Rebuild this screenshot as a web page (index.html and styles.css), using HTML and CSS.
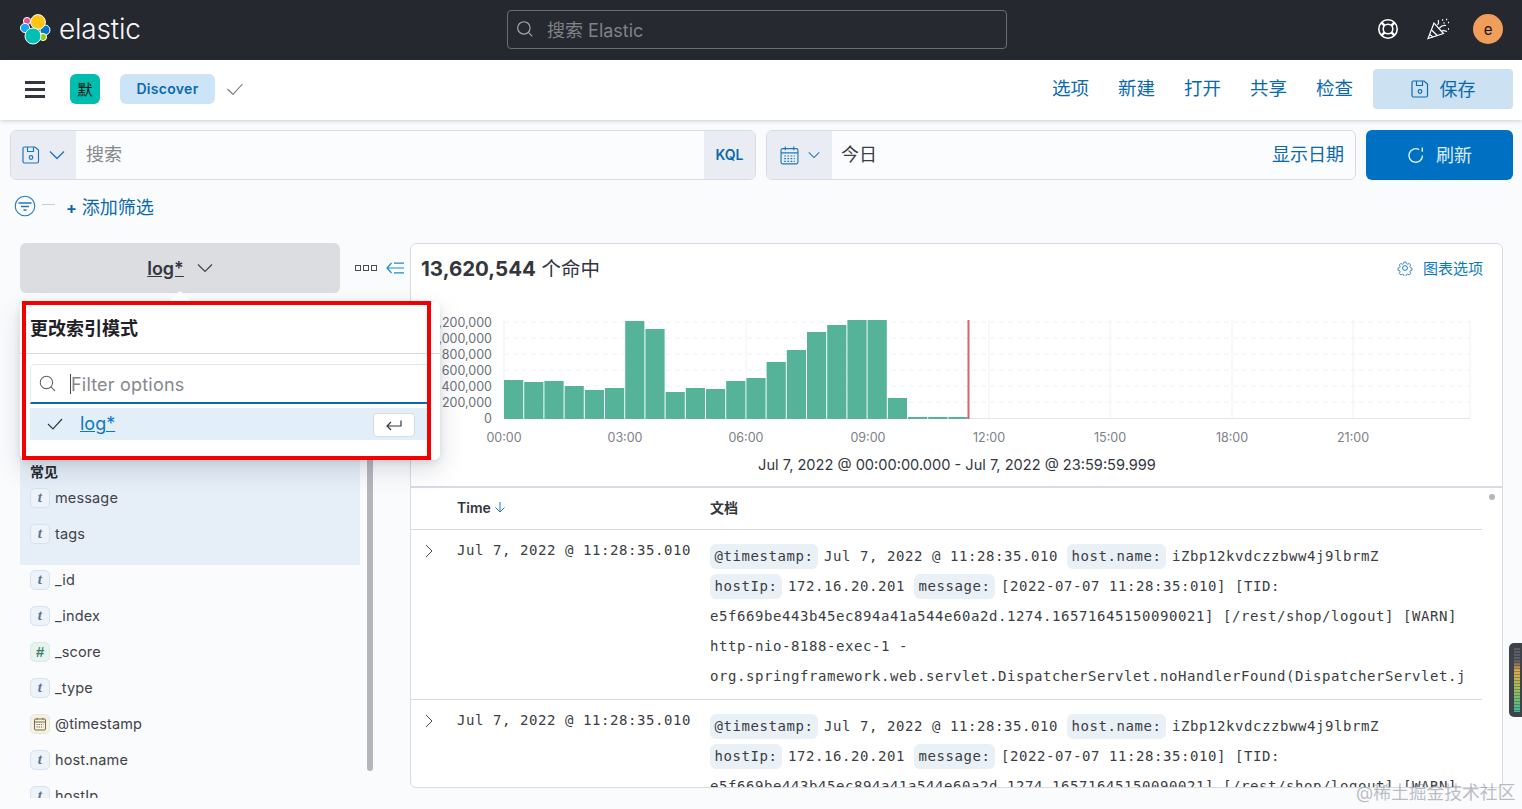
FILE: index.html
```html
<!DOCTYPE html>
<html lang="zh">
<head>
<meta charset="utf-8">
<title>Discover - Elastic</title>
<link rel="stylesheet" href="styles.css">
</head>
<body>
<header class="topbar">
  <div class="brand">
    <svg class="logo" viewBox="0 0 32 32" width="32" height="32">
      <g stroke="#fff" stroke-width="1">
        <circle cx="8" cy="8" r="3.6" fill="#ee5097"/>
        <circle cx="6" cy="15" r="4.6" fill="#1ba9f5"/>
        <circle cx="26" cy="17" r="5" fill="#0077cc"/>
        <circle cx="24" cy="24" r="3.6" fill="#93c90e"/>
        <circle cx="19" cy="9" r="7.4" fill="#fec514"/>
        <circle cx="14" cy="23" r="8" fill="#00bfb3"/>
      </g>
    </svg>
    <span class="wordmark">elastic</span>
  </div>
  <div class="global-search">
    <svg class="icon" viewBox="0 0 16 16" width="18" height="18"><circle cx="7" cy="7" r="5.5" fill="none" stroke="#a8abb0" stroke-width="1"/><path d="M11 11l3.5 3.5" stroke="#a8abb0" fill="none"/></svg>
    <span>搜索 Elastic</span>
  </div>
  <div class="top-actions">
    <svg viewBox="0 0 22 22" width="22" height="22" fill="none" stroke="#fff" stroke-width="1.6"><circle cx="11" cy="11" r="9.2"/><circle cx="11" cy="11" r="4.8"/><path d="M4.6 4.6l3 3M17.4 4.6l-3 3M4.6 17.4l3-3M17.4 17.4l-3-3" stroke-width="2.4"/></svg>
    <svg class="party" viewBox="0 0 22 22" width="22" height="22" fill="none" stroke="#fff" stroke-width="1.2"><path d="M7 5L1 20.500l15.500-5z"/><path d="M4.500 12l6 5.800M3 16.500l2.800 2.600"/><path d="M10.500 7c1.200-1.700 1.400-3.200.8-5M12.500 10c2-2.400 4-3 6.500-2.500M14.500 13c1.500-.6 3-.5 5.500.5"/><path d="M15 2h1.200M19 1.500h1.200M16.500 5h1M21 4.500h1M21 11h1" stroke-width="1.400"/></svg>
    <div class="avatar">e</div>
  </div>
</header>

<nav class="appbar">
  <div class="hamburger"><i></i><i></i><i></i></div>
  <div class="space-badge">默</div>
  <div class="crumb">Discover</div>
  <svg class="crumb-check" viewBox="0 0 16 12" width="16" height="12" fill="none" stroke="#6f7277" stroke-width="1.100"><path d="M.5 6l5.500 5.300L15.500 1"/></svg>
  <div class="app-links">
    <a>选项</a><a>新建</a><a>打开</a><a>共享</a><a>检查</a>
    <button class="save-btn">
      <svg viewBox="0 0 18 18" width="18" height="18" fill="none" stroke="#0e6cb0" stroke-width="1.200"><path d="M2.500 1h10.500l3.500 3v11.500a1.500 1.500 0 0 1-1.500 1.500h-12.500a1.500 1.500 0 0 1-1.500-1.500v-13a1.500 1.500 0 0 1 1.500-1.500z"/><path d="M5.500 1v4.500h6v-4.500"/><circle cx="9" cy="11.500" r="1.800"/></svg>
      <span>保存</span>
    </button>
  </div>
</nav>

<section class="querybar">
  <div class="field-group query-field">
    <div class="prepend">
      <svg viewBox="0 0 18 18" width="18" height="18" fill="none" stroke="#1e77bd" stroke-width="1.200"><path d="M2.500 1h10.500l3.500 3v11.500a1.500 1.500 0 0 1-1.500 1.500h-12.500a1.500 1.500 0 0 1-1.500-1.500v-13a1.500 1.500 0 0 1 1.500-1.500z"/><path d="M5.500 1v4.500h6v-4.500"/><circle cx="9" cy="11.500" r="1.800"/></svg>
      <svg viewBox="0 0 16 10" width="16" height="10" fill="none" stroke="#1e77bd" stroke-width="1.400"><path d="M1 1.500l7 7 7-7"/></svg>
    </div>
    <div class="query-text">搜索</div>
    <div class="kql">KQL</div>
  </div>
  <div class="field-group date-field">
    <div class="prepend">
      <svg viewBox="0 0 18 18" width="19" height="19" fill="none" stroke="#1e77bd" stroke-width="1.100"><rect x="1" y="2.500" width="16" height="14.500" rx="1.500"/><path d="M1 6.500h16M5 .5v3.500M13 .5v3.500"/><path d="M4 9.500h10M4 12h10M4 14.500h10" stroke-dasharray="1.600 1.400"/></svg>
      <svg viewBox="0 0 16 10" width="12" height="8" fill="none" stroke="#1e77bd" stroke-width="1.400"><path d="M1 1.500l7 7 7-7"/></svg>
    </div>
    <div class="date-text">今日</div>
    <div class="show-date">显示日期</div>
  </div>
  <button class="refresh-btn">
    <svg viewBox="0 0 18 18" width="18" height="18" fill="none" stroke="#e2f0fa" stroke-width="1.400"><path d="M15.500 9.500a6.800 6.800 0 1 1-3.400-5.900"/><path d="M15.300 1.500v4.200"/></svg>
    <span>刷新</span>
  </button>
</section>

<section class="filterbar">
  <svg viewBox="0 0 22 22" width="22" height="22" fill="none" stroke="#1e77bd" stroke-width="1.100"><circle cx="11" cy="11" r="9.800"/><path d="M4.500 8h13M7 11.500h8M9.500 15h3" stroke-width="1.300"/></svg>
  <span class="filter-dash"></span>
  <span class="add-filter"><b>+</b>添加筛选</span>
</section>

<main class="workspace">
  <aside class="sidebar">
    <div class="index-row">
      <div class="index-btn"><span>log*</span>
        <svg viewBox="0 0 16 10" width="16" height="10" fill="none" stroke="#404349" stroke-width="1.200"><path d="M1 1.500l7 7 7-7"/></svg>
      </div>
      <div class="dots"><i></i><i></i><i></i></div>
      <svg class="collapse" viewBox="0 0 18 12" width="18" height="12" fill="none" stroke="#1e8ad0" stroke-width="1.200"><path d="M5.500 1L1 6l4.500 5M1 6h17M8 1.200h10M8 10.800h10"/></svg>
    </div>

    <div class="field-pane">
      <div class="field-scroll">
        <div class="common">
          <h4>常见</h4>
          <div class="field"><span class="token t-str">t</span>message</div>
          <div class="field"><span class="token t-str">t</span>tags</div>
        </div>
        <div class="rest">
          <div class="field"><span class="token t-str">t</span>_id</div>
          <div class="field"><span class="token t-str">t</span>_index</div>
          <div class="field"><span class="token t-num">#</span>_score</div>
          <div class="field"><span class="token t-str">t</span>_type</div>
          <div class="field"><span class="token t-date"><svg viewBox="0 0 14 14" width="14" height="14" fill="none" stroke="#7b6a3f" stroke-width="1"><rect x="1.500" y="2" width="11" height="11" rx="1"/><path d="M1.500 5h11M4 .8v2M10 .8v2"/><path d="M3.500 7.500h7M3.500 10h7" stroke-dasharray="1.200 1"/></svg></span>@timestamp</div>
          <div class="field"><span class="token t-str">t</span>host.name</div>
          <div class="field"><span class="token t-str">t</span>hostIp</div>
        </div>
      </div>
      <div class="scrollbar"></div>
    </div>

    <div class="popover">
      <span class="arrow"></span>
      <h3>更改索引模式</h3>
      <div class="pop-rule"></div>
      <div class="pop-search">
        <svg viewBox="0 0 16 16" width="17" height="17" fill="none" stroke="#5f6368" stroke-width="1"><circle cx="7" cy="7" r="5.800"/><path d="M11.200 11.200l3.800 3.800"/></svg>
        <span class="caret"></span><span class="placeholder">Filter options</span>
      </div>
      <div class="pop-option">
        <svg viewBox="0 0 16 12" width="16" height="12" fill="none" stroke="#343741" stroke-width="1.200"><path d="M1 6l5 5L15 1"/></svg>
        <a>log*</a>
        <span class="enter-key"><svg viewBox="0 0 16 12" width="16" height="12" fill="none" stroke="#343741" stroke-width="1.200"><path d="M15 1.500v5.500h-14M5 3L1 7l4 4"/></svg></span>
      </div>
      <div class="red-frame"></div>
    </div>
  </aside>

  <section class="card">
    <div class="card-head">
      <div class="hits"><strong>13,620,544</strong> 个命中</div>
      <div class="chart-opts">
        <svg viewBox="0 0 16 16" width="16" height="16" fill="none" stroke="#1e77bd" stroke-width="1"><circle cx="8" cy="8" r="2.400"/><path d="M6.700 1h2.600l.4 1.900 1.500.7 1.700-1 1.800 1.900-1 1.600.6 1.500 1.900.5v2.600l-1.900.5-.6 1.500 1 1.600-1.800 1.900-1.700-1-1.500.6-.4 2h-2.600l-.4-2-1.500-.6-1.700 1-1.800-1.900 1-1.600-.6-1.500-1.900-.5v-2.600l1.900-.5.600-1.500-1-1.600 1.800-1.900 1.700 1 1.500-.7z" transform="translate(1.200 1.200) scale(.85)"/></svg>
        <span>图表选项</span>
      </div>
    </div>
    <div class="chart">
      <svg viewBox="411 294 1091 192" width="1091" height="192">
        <g class="grid-h">
          <path d="M504 322H1470M504 338H1470M504 354H1470M504 370H1470M504 386H1470M504 402H1470"/>
        </g>
        <g class="grid-v">
          <path d="M504 320V418M625 320V418M746 320V418M868 320V418M989 320V418M1110 320V418M1232 320V418M1353 320V418M1470 320V418"/>
        </g>
        <path class="axis" d="M504 418.500H1470"/>
        <g class="bars">
          <rect x="504" y="380" width="19.200" height="39"/><rect x="524.200" y="382" width="19.200" height="37"/><rect x="544.400" y="381" width="19.200" height="38"/><rect x="564.600" y="386" width="19.200" height="33"/><rect x="584.800" y="390" width="19.200" height="29"/><rect x="605" y="388" width="19.200" height="31"/><rect x="625.200" y="321" width="19.200" height="98"/><rect x="645.400" y="329" width="19.200" height="90"/><rect x="665.600" y="392" width="19.200" height="27"/><rect x="685.800" y="388" width="19.200" height="31"/><rect x="706" y="389" width="19.200" height="30"/><rect x="726.200" y="381" width="19.200" height="38"/><rect x="746.400" y="378" width="19.200" height="41"/><rect x="766.600" y="362" width="19.200" height="57"/><rect x="786.800" y="350" width="19.200" height="69"/><rect x="807" y="332" width="19.200" height="87"/><rect x="827.200" y="325" width="19.200" height="94"/><rect x="847.400" y="320" width="19.200" height="99"/><rect x="867.600" y="320" width="19.200" height="99"/><rect x="887.800" y="398" width="19.200" height="21"/><rect x="908" y="417" width="19.200" height="2"/><rect x="928.200" y="417" width="19.200" height="2"/><rect x="948.400" y="417" width="19.200" height="2"/>
        </g>
        <rect class="now" x="967.500" y="320" width="2" height="99"/>
        <g class="y-labels">
          <text x="492" y="327">1,200,000</text><text x="492" y="343">1,000,000</text><text x="492" y="359">800,000</text><text x="492" y="375">600,000</text><text x="492" y="391">400,000</text><text x="492" y="407">200,000</text><text x="492" y="423">0</text>
        </g>
        <g class="x-labels">
          <text x="504" y="442">00:00</text><text x="625" y="442">03:00</text><text x="746" y="442">06:00</text><text x="868" y="442">09:00</text><text x="989" y="442">12:00</text><text x="1110" y="442">15:00</text><text x="1232" y="442">18:00</text><text x="1353" y="442">21:00</text>
        </g>
        <text class="range" x="957" y="470">Jul 7, 2022 @ 00:00:00.000 - Jul 7, 2022 @ 23:59:59.999</text>
      </svg>
    </div>
    <div class="table">
      <div class="t-head">
        <div class="col-time">Time
          <svg viewBox="0 0 12 12" width="12" height="12" fill="none" stroke="#1e77bd" stroke-width="1"><path d="M6 1v10M1.500 6.500L6 11l4.500-4.500"/></svg>
        </div>
        <div class="col-doc">文档</div>
      </div>
      <div class="t-row">
        <svg class="chev" viewBox="0 0 8 14" width="8" height="14" fill="none" stroke="#4a4d52" stroke-width="1"><path d="M1 1l6 6-6 6"/></svg>
        <div class="col-time mono">Jul 7, 2022 @ 11:28:35.010</div>
        <div class="col-doc mono">
          <div class="line"><span class="tag">@timestamp:</span>Jul 7, 2022 @ 11:28:35.010<span class="tag">host.name:</span>iZbp12kvdczzbww4j9lbrmZ</div>
          <div class="line"><span class="tag">hostIp:</span>172.16.20.201<span class="tag">message:</span>[2022-07-07 11:28:35:010] [TID:</div>
          <div class="line">e5f669be443b45ec894a41a544e60a2d.1274.16571645150090021] [/rest/shop/logout] [WARN]</div>
          <div class="line">http-nio-8188-exec-1 -</div>
          <div class="line">org.springframework.web.servlet.DispatcherServlet.noHandlerFound(DispatcherServlet.java</div>
        </div>
      </div>
      <div class="t-row">
        <svg class="chev" viewBox="0 0 8 14" width="8" height="14" fill="none" stroke="#4a4d52" stroke-width="1"><path d="M1 1l6 6-6 6"/></svg>
        <div class="col-time mono">Jul 7, 2022 @ 11:28:35.010</div>
        <div class="col-doc mono">
          <div class="line"><span class="tag">@timestamp:</span>Jul 7, 2022 @ 11:28:35.010<span class="tag">host.name:</span>iZbp12kvdczzbww4j9lbrmZ</div>
          <div class="line"><span class="tag">hostIp:</span>172.16.20.201<span class="tag">message:</span>[2022-07-07 11:28:35:010] [TID:</div>
          <div class="line">e5f669be443b45ec894a41a544e60a2d.1274.16571645150090021] [/rest/shop/logout] [WARN]</div>
        </div>
      </div>
    </div>
    <span class="table-dot"></span>
  </section>
</main>

<div class="side-widget"><i></i></div>
<div class="watermark">@稀土掘金技术社区</div>
</body>
</html>
```

FILE: styles.css
```css
* { box-sizing: border-box; }
html, body { margin: 0; height: 100%; }
body {
  width: 1522px; height: 809px; overflow: hidden; position: relative;
  background: #fafbfd; color: #343741;
  font-family: Inter, "Noto Sans CJK SC", sans-serif; font-size: 14px;
}
a { color: inherit; }
button { font: inherit; border: 0; }

/* top bar */
.topbar { height: 60px; padding-bottom: 2px; background: #25282f; display: flex; align-items: center; position: relative; }
.brand { display: flex; align-items: center; margin-left: 19px; width: 488px; }
.logo { display: block; }
.wordmark { margin-left: 8px; color: #f5f7fa; font-size: 28px; font-weight: 300; letter-spacing: -.2px; }
.global-search {
  width: 500px; height: 39px; border: 1px solid #6a6d72; border-radius: 4px;
  display: flex; align-items: center; padding-left: 8px; gap: 13px;
  color: #7f8287; font-size: 18px; background: #26292f;
}
.top-actions { display: flex; align-items: center; margin-left: auto; margin-right: 19px; }
.top-actions svg { display: block; }
.party { margin: 0 24px 0 28px; }
.avatar {
  width: 30px; height: 30px; border-radius: 50%; background: #f19e5b; color: #111;
  display: flex; align-items: center; justify-content: center; font-size: 15px;
}

/* app bar */
.appbar {
  height: 60px; padding: 0 0 2px 25px; background: #fff; display: flex; align-items: center;
  box-shadow: 0 1px 4px rgba(60,70,90,.25); position: relative; z-index: 3;
}
.hamburger { width: 20px; display: flex; flex-direction: column; gap: 4px; }
.hamburger i { display: block; height: 3px; background: #33363c; }
.space-badge {
  width: 30px; height: 30px; margin-left: 25px; border-radius: 6px; background: #00bdae; color: #111;
  display: flex; align-items: center; justify-content: center; font-size: 15px; padding-bottom: 2px;
}
.crumb {
  margin-left: 20px; width: 95px; height: 30px; border-radius: 6px; background: #cce4f5; color: #0a69ad;
  display: flex; align-items: center; justify-content: center; font-weight: 600; font-size: 14px; letter-spacing: .3px; padding-bottom: 2px;
}
.crumb-check { margin-left: 12px; }
.app-links { margin-left: auto; margin-right: 9px; display: flex; align-items: center; color: #0a69ad; font-size: 18.500px; }
.app-links a { margin-right: 29px; line-height: 40px; padding-bottom: 2px; }
.app-links a:nth-child(5) { margin-right: 20px; }
.save-btn {
  width: 140px; height: 40px; background: #cce2f3; color: #0a69ad; border-radius: 4px; font-size: 18px;
  display: flex; align-items: center; justify-content: center; gap: 11px;
}
.save-btn span, .refresh-btn span { padding-bottom: 3px; }

/* query */
.querybar { margin-top: 10px; padding: 0 9px 0 10px; display: flex; gap: 10px; height: 50px; }
.field-group {
  display: flex; align-items: center; height: 50px; border: 1px solid #d8dbe2; border-radius: 6px;
  background: #fbfcfd; overflow: hidden; font-size: 18px;
}
.query-field { width: 746px; }
.date-field { width: 590px; }
.prepend { width: 65px; height: 100%; background: #e9edf3; display: flex; align-items: center; justify-content: center; gap: 9px; flex: none; }
.query-text { flex: 1; padding: 0 0 5px 10px; color: #84878c; }
.kql { width: 51px; height: 100%; background: #e9edf3; color: #0a69ad; font-weight: 600; font-size: 14px; display: flex; align-items: center; justify-content: center; padding-bottom: 1px; }
.date-text { flex: 1; padding: 0 0 4px 9px; color: #3b3e44; }
.show-date { color: #0a69ad; padding: 0 11px 4px 0; }
.refresh-btn {
  width: 147px; height: 50px; background: #0071c2; color: #dcedf8; border-radius: 6px; font-size: 18px;
  display: flex; align-items: center; justify-content: center; gap: 11px;
}

/* filter */
.filterbar { height: 25px; margin: 13px 0 25px 14px; display: flex; align-items: center; color: #0a69ad; font-size: 18px; }
.filter-dash { width: 13px; height: 1px; background: #c9ccd2; margin: 0 0 2px 6px; }
.add-filter { margin: 0 0 0 11px; }
.add-filter b { margin-right: 5px; font-size: 16px; }

/* workspace */
.workspace { display: flex; padding-left: 20px; }
.sidebar { width: 390px; flex: none; position: relative; z-index: 2; height: 555px; }
.index-row { display: flex; align-items: center; height: 50px; }
.index-btn {
  width: 320px; height: 50px; background: #dcdde1; border-radius: 6px; color: #343741;
  display: flex; align-items: center; justify-content: center; gap: 13px; font-size: 18px; font-weight: 600;
}
.index-btn span { text-decoration: underline; }
.dots { display: flex; gap: 2px; margin-left: 15px; }
.dots i { display: block; width: 6px; height: 6px; border: 1px solid #4b4e54; }
.collapse { margin-left: 9px; }

.field-pane { margin-top: 162px; display: flex; height: 343px; }
.field-scroll { width: 340px; overflow: hidden; flex: none; }
.scrollbar { width: 6px; height: 316px; margin-left: 7px; background: #b4b6bc; border-radius: 0 0 3px 3px; }
.common { background: #e6eff8; height: 110px; padding: 7px 10px 0; }
.common h4 { margin: 0 0 1px; height: 20px; line-height: 20px; font-size: 14px; font-weight: 700; color: #25282f; }
.rest { padding-left: 10px; }
.field { height: 36px; padding-bottom: 7px; display: flex; align-items: center; gap: 5px; color: #3f4248; font-size: 14.500px; letter-spacing: .15px; }
.token {
  width: 20px; height: 20px; border-radius: 5px; border: 1px solid #d8e2ee; background: #eef3fa; flex: none;
  display: flex; align-items: center; justify-content: center;
  font: italic 700 15px "Liberation Serif", serif; color: #5a7596;
}
.t-num { background: #e6f3ee; border-color: #d8ebe3; color: #3e7f68; font-family: "Liberation Sans", sans-serif; }
.t-date { background: #f6f1e6; border-color: #ece6d8; }

/* popover */
.popover {
  position: absolute; left: 0; top: 59px; width: 420px; height: 158px; background: #fff; border-radius: 6px;
  box-shadow: 0 2px 6px rgba(60,70,90,.12), 0 10px 24px rgba(60,70,90,.18);
}
.arrow {
  position: absolute; left: 152px; top: -8px; width: 16px; height: 16px; background: #fff;
  transform: rotate(45deg); border-radius: 2px;
}
.popover h3 { position: relative; margin: 0; height: 51px; padding: 15px 0 0 10px; line-height: 24px; font-size: 18px; font-weight: 700; color: #1f2126; }
.pop-rule { height: 1px; background: #d8dbe2; }
.pop-search {
  position: relative; margin: 10px 10px 0; width: 400px; height: 40px; border: 1px solid #e3e6ec; border-bottom: 2px solid #0a69ad;
  border-radius: 5px 5px 0 0; display: flex; align-items: center; padding-left: 8px; color: #8a8d93; font-size: 18px;
}
.caret { width: 1px; height: 20px; background: #44474c; margin-left: 14px; }
.placeholder { color: #85888e; letter-spacing: .2px; padding-top: 2px; }
.pop-option {
  position: relative; margin: 4px 10px 0; width: 400px; height: 32px; background: #e3eff8; display: flex; align-items: center; padding-left: 17px; font-size: 18px;
}
.pop-option a { margin-left: 17px; color: #0a79c4; text-decoration: underline; padding-bottom: 1px; }
.enter-key {
  position: absolute; left: 343px; top: 5px; width: 42px; height: 24px; background: #fff; border: 1px solid #d8dbe2; border-radius: 4px;
  display: flex; align-items: center; justify-content: center;
}
.red-frame { position: absolute; left: 2px; top: -1px; width: 409px; height: 159px; border: 4px solid #f40000; }

/* card */
.card {
  position: relative; width: 1093px; height: 545px; background: #fff; border: 1px solid #d8dbe2; border-radius: 6px; overflow: hidden;
}
.card-head { height: 50px; display: flex; align-items: center; justify-content: space-between; padding: 0 19px 3px 10px; }
.hits { font-size: 19.500px; color: #33363c; }
.hits strong { font-size: 20.500px; font-weight: 700; }
.chart-opts { display: flex; align-items: center; gap: 10px; color: #0a79c4; font-size: 15px; }
.chart { height: 194px; border-bottom: 2px solid #d8dbe2; }
.chart svg { display: block; }
.grid-h path { stroke: #eef0f3; stroke-dasharray: 5 4; fill: none; }
.grid-v path { stroke: #f0f2f5; fill: none; }
.axis { stroke: #e3e6ea; fill: none; }
.bars rect { fill: #54b399; }
.now { fill: #d9636c; }
.y-labels text { text-anchor: end; font: 12.500px Inter, sans-serif; fill: #6c7078; }
.x-labels text { text-anchor: middle; font: 12.500px Inter, sans-serif; fill: #7c8087; }
.range { text-anchor: middle; font: 14.600px Inter, sans-serif; fill: #343741; }

/* table */
.table { margin-right: 20px; }
.t-head { height: 42px; padding: 0 0 3px 46px; display: flex; align-items: center; border-bottom: 1px solid #d8dbe2; font-weight: 600; color: #33363c; }
.t-head .col-time { width: 253px; }
.t-row { position: relative; height: 170px; display: flex; padding: 11px 0 0 46px; border-bottom: 1px solid #d8dbe2; }
.chev { position: absolute; left: 14px; top: 14px; }
.t-row .col-time { width: 253px; line-height: 20px; flex: none; margin-top: -1px; }
.mono { font-family: "DejaVu Sans Mono", monospace; font-size: 14px; letter-spacing: .57px; color: #3a3d43; }
.col-doc { width: 755px; flex: none; }
.line { height: 30px; line-height: 30px; white-space: nowrap; overflow: hidden; }
.tag { display: inline-block; height: 25px; line-height: 25px; padding: 0 4.500px; margin: 0 6px 0 9px; border-radius: 6px; background: #e9f0f6; }
.tag:first-child { margin-left: 0; }
.table-dot { position: absolute; right: 7px; top: 250px; width: 6px; height: 6px; border-radius: 50%; background: #b4b6bc; }

/* overlays */
.side-widget {
  position: absolute; right: -6px; top: 643px; width: 19px; height: 74px; border-radius: 5px; background: #3f4349;
}
.side-widget i {
  display: block; width: 6px; height: 64px; margin: 5px 0 0 5px;
  background: repeating-linear-gradient(to bottom, transparent 0 2px, rgba(0,0,0,.25) 2px 3px),
              linear-gradient(to bottom, #5a5f66 0 20%, #d9a84e 35%, #9bbf5a 65%, #3fb69b 100%);
}
.watermark { position: absolute; left: 1356px; top: 782px; color: rgba(120,125,135,.5); font-size: 17.800px; line-height: 22px; }
```
